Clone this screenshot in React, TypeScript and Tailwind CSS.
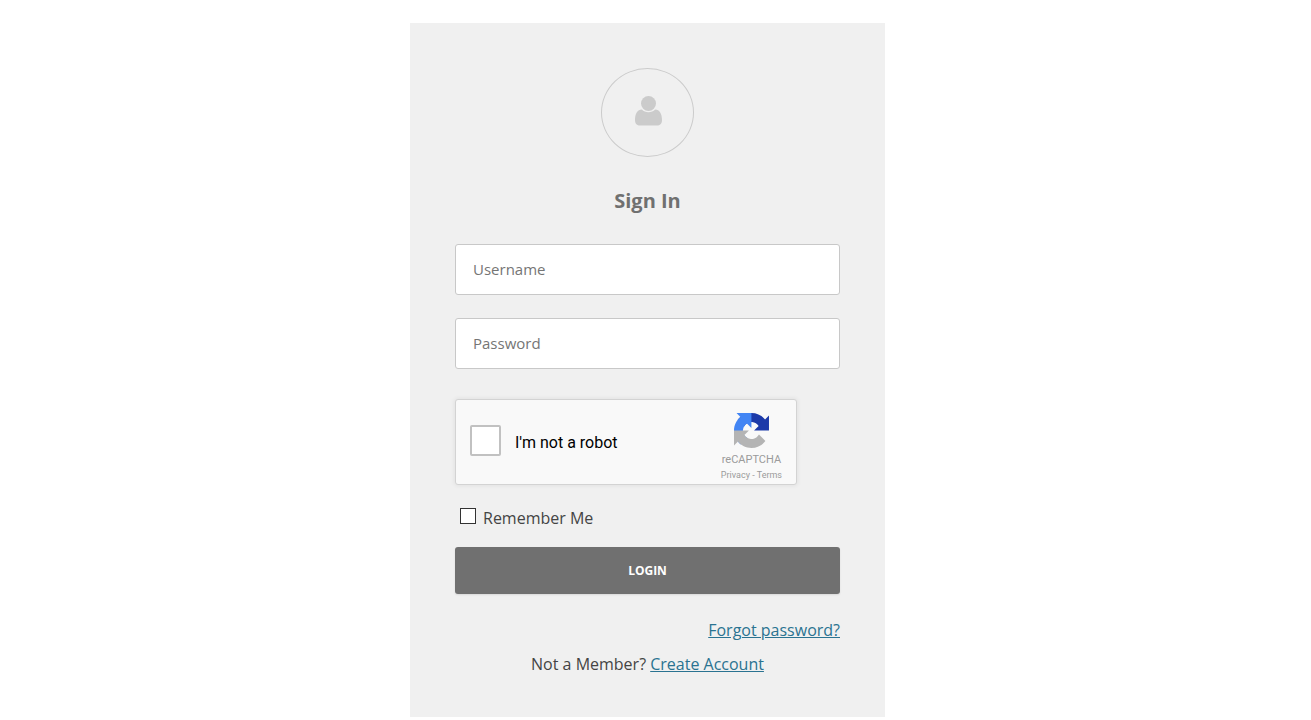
import React from "react";

function UserIcon() {
  return (
    <svg aria-hidden="true" viewBox="0 0 27 30" className="h-[30px] w-[27px] fill-[#cbcbcb]">
      <circle cx="13.5" cy="7.5" r="7.5" />
      <path d="M6.8 13.4C8.600 15.200 10.900 16.200 13.500 16.200S18.400 15.200 20.200 13.400C24.600 13.400 27 17.600 27 24.300C27 27.600 24.900 29.600 22 29.600H5C2.100 29.600 0 27.600 0 24.300C0 17.600 2.400 13.400 6.800 13.400Z" />
    </svg>
  );
}

function RecaptchaLogo() {
  return (
    <svg aria-hidden="true" viewBox="0 0 64 64" className="size-[35px]">
      <path
        fill="#1c3aa9"
        d="M64 31.955l-.033-1.37V4.687l-7.16 7.16C50.948 4.674 42.033.093 32.05.093c-10.4 0-19.622 4.96-25.458 12.64l11.736 11.86a15.55 15.55 0 0 1 4.754-5.334c2.05-1.6 4.952-2.906 8.968-2.906.485 0 .86.057 1.135.163 4.976.393 9.288 3.14 11.828 7.124l-8.307 8.307L64 31.953"
      />
      <path
        fill="#4285f4"
        d="M31.862.094l-1.37.033H4.594l7.16 7.16C4.58 13.147 0 22.06 0 32.046c0 10.4 4.96 19.622 12.64 25.458L24.5 45.768a15.55 15.55 0 0 1-5.334-4.754c-1.6-2.05-2.906-4.952-2.906-8.968 0-.485.057-.86.163-1.135.393-4.976 3.14-9.288 7.124-11.828l8.307 8.307L31.86.095"
      />
      <path
        fill="#b4b4b4"
        d="M.001 32.045l.033 1.37v25.898l7.16-7.16c5.86 7.173 14.774 11.754 24.76 11.754 10.4 0 19.622-4.96 25.458-12.64l-11.736-11.86a15.55 15.55 0 0 1-4.754 5.334c-2.05 1.6-4.952 2.906-8.968 2.906-.485 0-.86-.057-1.135-.163-4.976-.393-9.288-3.14-11.828-7.124l8.307-8.307-31.3.006"
      />
    </svg>
  );
}

function Recaptcha() {
  return (
    <div className="mt-[30px] flex w-full max-w-[342px] items-start justify-between rounded-[3px] border border-[#d3d3d3] bg-[#f9f9f9] px-3.5 font-['Roboto',sans-serif] shadow-[0_0_4px_1px_rgba(0,0,0,0.06)]">
      <label className="flex items-center gap-3.5 pt-[25px] pb-7 text-base text-black">
        <input
          type="checkbox"
          className="size-[31px] appearance-none rounded-[2px] border-2 border-[#c1c1c1] bg-white checked:bg-[#4285f4]"
        />
        <span className="pt-1">I'm not a robot</span>
      </label>
      <div className="flex flex-col items-center pt-[13px] text-[#9b9b9b]">
        <RecaptchaLogo />
        <span className="mt-1 text-[11px] leading-4">reCAPTCHA</span>
        <span className="text-[9px] leading-[15px]">
          <a href="#privacy">Privacy</a> - <a href="#terms">Terms</a>
        </span>
      </div>
    </div>
  );
}

type FieldProps = { label: string; type: string };

function Field({ label, type }: FieldProps) {
  return (
    <input
      type={type}
      aria-label={label}
      placeholder={label}
      className="block h-[51px] w-full rounded-[3px] border border-[#c8c8c8] bg-white px-[17px] pb-0.5 text-[15px] text-[#444] placeholder:text-[#757575]"
    />
  );
}

export default function App() {
  return (
    <main className="bg-white py-[23px] pr-4 pb-[3px] font-['Open_Sans',sans-serif] text-base leading-6 text-[#444]">
      <form
        className="mx-auto flex w-full max-w-[475px] flex-col bg-[#f0f0f0] px-[45px] pt-[45px] pb-[41px]"
        onSubmit={(event) => event.preventDefault()}
      >
        <div className="flex h-[89px] w-[93px] items-center justify-center self-center rounded-[50%] border border-[#cbcbcb] pb-1 pl-0.5">
          <UserIcon />
        </div>
        <h1 className="mt-7 text-center text-xl leading-8 font-bold text-[#707070]">Sign In</h1>

        <div className="mt-[27px] flex flex-col gap-[23px]">
          <Field label="Username" type="text" />
          <Field label="Password" type="password" />
        </div>

        <Recaptcha />

        <label className="mt-[21px] flex items-center gap-[7px] pl-[5px]">
          <input
            type="checkbox"
            className="mb-1 size-4 appearance-none border border-[#333] bg-white checked:bg-[#333]"
          />
          Remember Me
        </label>

        <button
          type="submit"
          className="mt-[17px] h-[47px] rounded-[3px] bg-[#707070] text-xs font-bold text-white shadow-[0_1px_2px_rgba(0,0,0,0.1)]"
        >
          LOGIN
        </button>

        <a href="#forgot" className="mt-6 self-end text-[#2a7391] underline">
          Forgot password?
        </a>
        <p className="mt-2.5 text-center">
          Not a Member?{" "}
          <a href="#create" className="text-[#2a7391] underline">
            Create Account
          </a>
        </p>
      </form>
    </main>
  );
}
